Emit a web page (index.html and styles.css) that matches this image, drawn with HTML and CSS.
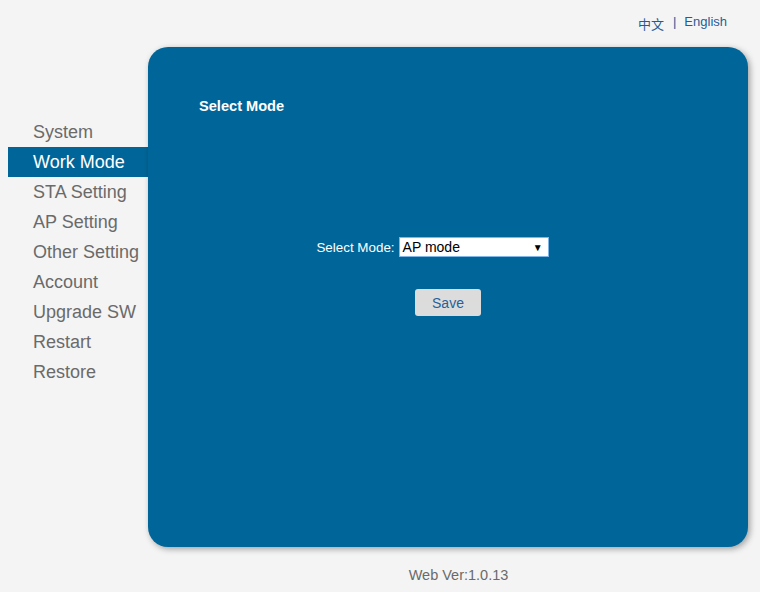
FILE: index.html
```html
<!DOCTYPE html>
<html>
<head>
<meta charset="utf-8">
<link rel="stylesheet" href="styles.css">
</head>
<body>
<div class="top">
  <a class="lang" href="#">中文</a><span class="sep">|</span><a class="lang" href="#">English</a>
</div>
<div class="main">
  <ul class="menu">
    <li>System</li>
    <li class="active">Work Mode</li>
    <li>STA Setting</li>
    <li>AP Setting</li>
    <li>Other Setting</li>
    <li>Account</li>
    <li>Upgrade SW</li>
    <li>Restart</li>
    <li>Restore</li>
  </ul>
  <div class="panel">
    <h2 class="title">Select Mode</h2>
    <div class="row">
      <span class="label">Select Mode:</span>
      <div class="select"><span>AP mode</span><span class="arrow">▼</span></div>
    </div>
    <div class="actions"><button class="save">Save</button></div>
  </div>
</div>
<div class="footer">Web Ver:1.0.13</div>
</body>
</html>
```
FILE: styles.css
```css
html, body { margin: 0; padding: 0; }
body {
  background: #f4f4f4;
  font-family: "Liberation Sans", Arial, sans-serif;
  width: 760px;
  height: 592px;
  overflow: hidden;
}
.top {
  height: 47px;
  display: flex;
  justify-content: flex-end;
  align-items: flex-start;
  padding-right: 33px;
  box-sizing: border-box;
  padding-top: 14px;
  font-size: 13px;
  color: #1d5e98;
}
.lang { color: #1d5e98; text-decoration: none; font-family: "Liberation Sans", "Noto Sans CJK SC", sans-serif; }
.sep { margin: 0 8px 0 9px; }
.main { display: flex; padding-left: 8px; }
.menu {
  list-style: none;
  margin: 0;
  padding: 70px 0 0 0;
  width: 140px;
}
.menu li {
  height: 30px;
  line-height: 30px;
  font-size: 18px;
  color: #6a6a6a;
  padding-left: 25px;
  white-space: nowrap;
}
.menu li.active { background: #006699; color: #fff; }
.panel {
  width: 600px;
  height: 500px;
  background: #006699;
  border-radius: 20px;
  box-shadow: 2px 2px 6px rgba(0,0,0,0.35);
  box-sizing: border-box;
  padding: 50px 0 0 51px;
}
.title {
  margin: 0;
  font-size: 14.6px;
  font-weight: bold;
  color: #fff;
  line-height: 18px;
}
.row {
  display: flex;
  justify-content: center;
  align-items: center;
  margin-top: 122px;
  padding-right: 82px;
  gap: 4px;
}
.label { color: #fff; font-size: 13.4px; }
.select {
  width: 150px;
  height: 20px;
  box-sizing: border-box;
  border: 1px solid #7fb6e6;
  background: #fff;
  display: flex;
  justify-content: space-between;
  align-items: center;
  padding: 0 5px 0 3px;
  font-size: 14px;
  color: #000;
}
.arrow { font-size: 10px; }
.actions {
  display: flex;
  justify-content: center;
  padding-right: 51px;
  margin-top: 32px;
}
.save {
  width: 66px;
  height: 27px;
  background: #dcdcdc;
  border: none;
  border-radius: 3px;
  color: #2a5f99;
  font-family: "Liberation Sans", Arial, sans-serif;
  font-size: 14px;
  padding: 0;
}
.footer {
  margin-top: 20px;
  padding-left: 157px;
  text-align: center;
  font-size: 14.5px;
  color: #6a6a6a;
}
```
